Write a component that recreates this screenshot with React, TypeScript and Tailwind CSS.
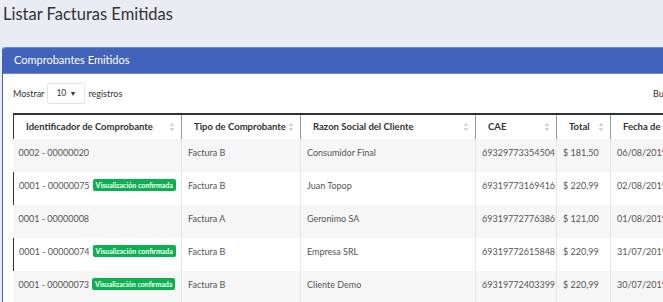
import React from "react";

type Row = {
  id: string;
  confirmed: boolean;
  tipo: string;
  cliente: string;
  cae: string;
  total: string;
  fecha: string;
};

const rows: Row[] = [
  { id: "0002 - 00000020", confirmed: false, tipo: "Factura B", cliente: "Consumidor Final", cae: "69329773354504", total: "$ 181,50", fecha: "06/08/2019" },
  { id: "0001 - 00000075", confirmed: true, tipo: "Factura B", cliente: "Juan Topop", cae: "69319773169416", total: "$ 220,99", fecha: "02/08/2019" },
  { id: "0001 - 00000008", confirmed: false, tipo: "Factura A", cliente: "Geronimo SA", cae: "69319772776386", total: "$ 121,00", fecha: "01/08/2019" },
  { id: "0001 - 00000074", confirmed: true, tipo: "Factura B", cliente: "Empresa SRL", cae: "69319772615848", total: "$ 220,99", fecha: "31/07/2019" },
  { id: "0001 - 00000073", confirmed: true, tipo: "Factura B", cliente: "Cliente Demo", cae: "69319772403399", total: "$ 220,99", fecha: "30/07/2019" },
];

const columns = [
  { label: "Identificador de Comprobante", w: "w-[168px]" },
  { label: "Tipo de Comprobante", w: "w-[119px]" },
  { label: "Razon Social del Cliente", w: "w-[175px]" },
  { label: "CAE", w: "w-[81px]" },
  { label: "Total", w: "w-[54px]" },
  { label: "Fecha de Emisión", w: "w-[120px]" },
  { label: "Acciones", w: "" },
];

const SortIcon = () => (
  <svg width="6" height="10" viewBox="0 0 6 10" className="shrink-0">
    <path d="M3 0.5 L5.5 4 H0.5 Z" fill="#d4d4d4" />
    <path d="M3 9.5 L5.5 6 H0.5 Z" fill="#d4d4d4" />
  </svg>
);

const App = () => {
  return (
    <div
      className="h-[302px] w-[663px] overflow-hidden bg-[#e9ecf3] text-[#555]"
      style={{ fontFamily: "Lato, 'Liberation Sans', sans-serif" }}
    >
      <h1 className="pl-[3px] pt-[3px] text-[16.5px] leading-[22px] text-[#333]">
        Listar Facturas Emitidas
      </h1>

      <div className="ml-[2px] mt-[22px] w-[846px] rounded-t-[3px] border-l border-[#4263bc] bg-white">
        {/* card header */}
        <div className="flex h-[27px] items-center rounded-tl-[3px] border-y border-[#6f89cf] bg-[#4163bb] pl-[11px] text-[11px] text-white">
          Comprobantes Emitidos
        </div>

        <div className="px-[10px]">
          {/* controls */}
          <div className="flex h-[39px] items-center justify-between text-[9px] text-[#333]">
            <div className="flex items-center gap-[3px]">
              <span>Mostrar</span>
              <div className="flex h-[21px] w-[38px] items-center justify-between rounded-[2px] border border-[#e3e3e3] px-[8px] text-[8.5px]">
                <span>10</span>
                <span className="text-[7px]">▼</span>
              </div>
              <span>registros</span>
            </div>
            <div className="flex items-center gap-[4px] pr-[2px]">
              <span>Buscar:</span>
              <div className="h-[21px] w-[150px] rounded-[2px] border border-[#e3e3e3]" />
            </div>
          </div>

          {/* table */}
          <table className="w-full table-fixed border-collapse text-[9px]">
            <thead>
              <tr className="h-[25px] border-t-2 border-l border-[#333] text-left text-[9.5px] text-[#333]">
                {columns.map((c) => (
                  <th key={c.label} className={`${c.w} border-r border-[#999] pl-[12px] pr-[6px] font-bold`}>
                    <div className="flex items-center justify-between">
                      <span className="whitespace-nowrap">{c.label}</span>
                      <SortIcon />
                    </div>
                  </th>
                ))}
              </tr>
            </thead>
            <tbody>
              {rows.map((r, i) => (
                <tr
                  key={r.id}
                  className={`h-[33px] ${i % 2 === 0 ? "bg-[#f6f6f6]" : "border-l border-[#333] bg-white"}`}
                >
                  <td className="whitespace-nowrap border-r border-[#e5e5e5] pb-[6px] pl-[5px]">
                    <span>{r.id}</span>
                    {r.confirmed && (
                      <span className="ml-[3px] inline-block rounded-[2px] bg-[#0bb14e] px-[3px] align-[1px] text-[7px] leading-[12px] font-bold text-white">
                        Visualización confirmada
                      </span>
                    )}
                  </td>
                  <td className="border-r border-[#e5e5e5] pb-[6px] pl-[6px]">{r.tipo}</td>
                  <td className="border-r border-[#e5e5e5] pb-[6px] pl-[6px]">{r.cliente}</td>
                  <td className="border-r border-[#e5e5e5] pb-[6px] pl-[6px]">{r.cae}</td>
                  <td className="whitespace-nowrap border-r border-[#e5e5e5] pb-[6px] pl-[6px]">{r.total}</td>
                  <td className="border-r border-[#e5e5e5] pb-[6px] pl-[6px]">{r.fecha}</td>
                  <td className="pb-[6px] pl-[6px]"></td>
                </tr>
              ))}
            </tbody>
          </table>
        </div>
      </div>
    </div>
  );
};

export default App;
